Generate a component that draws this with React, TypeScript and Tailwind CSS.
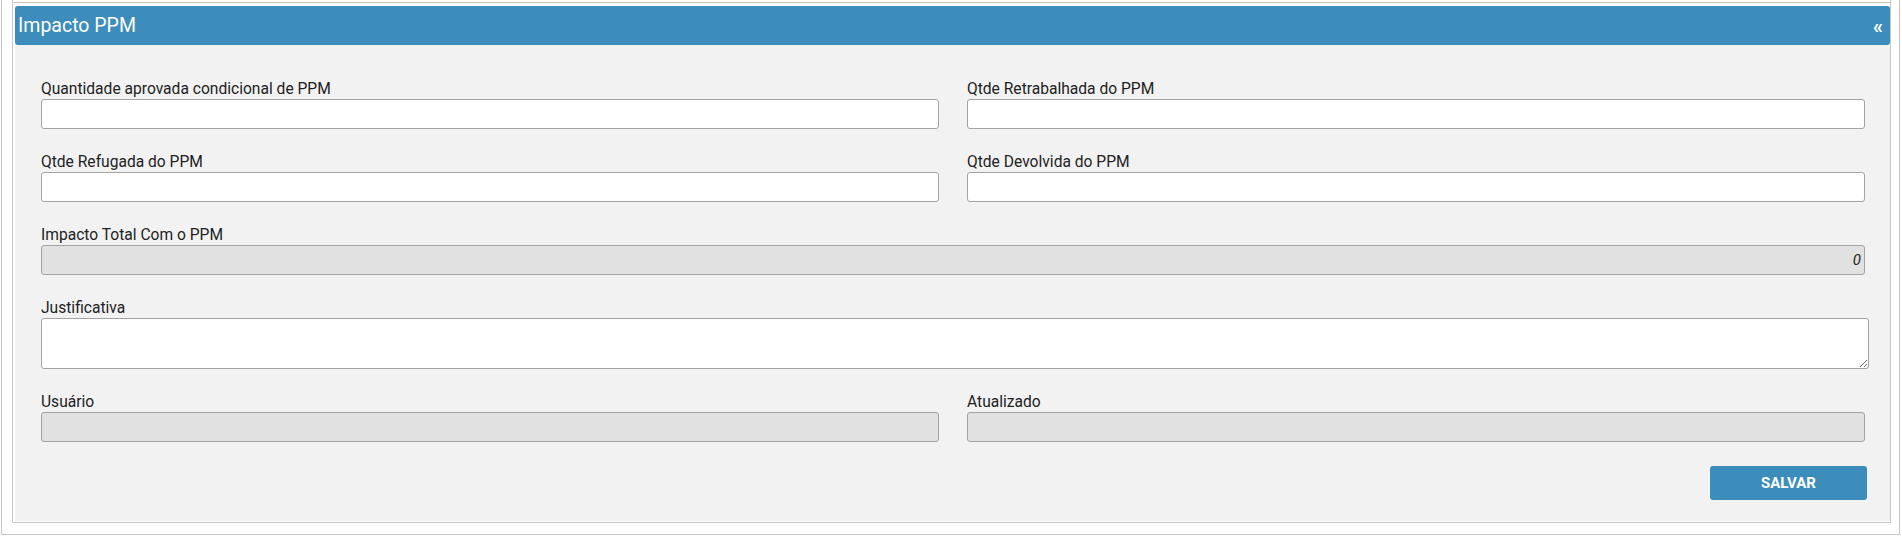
import { useState } from "react";

const FONT = "font-['Roboto','Liberation_Sans',sans-serif]";

function Field({
  label,
  value,
  disabled,
  italicRight,
}: {
  label: string;
  value?: string;
  disabled?: boolean;
  italicRight?: boolean;
}) {
  return (
    <div className="flex flex-col">
      <label className="h-[19px] text-[15.6px] leading-[19px] text-[#222]">{label}</label>
      <input
        type="text"
        defaultValue={value}
        disabled={disabled}
        className={`h-[30px] w-full rounded-[3px] border border-[#a3a3a3] px-[4px] text-[15px] text-[#222] outline-none ${
          disabled ? "bg-[#e1e1e1]" : "bg-white"
        } ${italicRight ? "pr-[3px] text-right italic" : ""}`}
      />
    </div>
  );
}

export default function App() {
  const [open, setOpen] = useState(true);

  return (
    <div className={`min-h-screen bg-white ${FONT}`}>
      <div className="ml-[1px] w-[1899px] border-x border-b border-[#c6c6c6] pb-[11px] pl-[10px] pr-[8px]">
        <div className="border-x border-b border-[#c6c6c6] bg-white pb-[1px] pl-[2px]">
          {/* remnant of the block above */}
          <div className="ml-[-2px] h-[3px] border-b border-[#c6c6c6] pl-[2px]" />
          <div className="mt-[3px] bg-[#f2f2f2]">
            <div className="flex h-[39px] items-center justify-between rounded-[3px] bg-[#3c8dbc] pl-[3px] pr-[7px] text-white">
              <span className="text-[19.5px] leading-none">Impacto PPM</span>
              <button
                onClick={() => setOpen(!open)}
                className="text-[20px] font-bold leading-none text-white"
              >
                «
              </button>
            </div>

            {open && (
              <div className="flex flex-col gap-[24px] pb-[21px] pl-[26px] pr-[25px] pt-[35px]">
                <div className="grid grid-cols-2 gap-x-[28px] gap-y-[24px]">
                  <Field label="Quantidade aprovada condicional de PPM" />
                  <Field label="Qtde Retrabalhada do PPM" />
                  <Field label="Qtde Refugada do PPM" />
                  <Field label="Qtde Devolvida do PPM" />
                </div>

                <Field label="Impacto Total Com o PPM" value="0" disabled italicRight />

                <div className="flex flex-col">
                  <label className="h-[19px] text-[15.6px] leading-[19px] text-[#222]">
                    Justificativa
                  </label>
                  <textarea className="h-[51px] w-[calc(100%+4px)] rounded-[3px] border border-[#a3a3a3] bg-white px-[4px] text-[15px] text-[#222] outline-none" />
                </div>

                <div className="grid grid-cols-2 gap-x-[28px]">
                  <Field label="Usuário" disabled />
                  <Field label="Atualizado" disabled />
                </div>

                <div className="flex justify-end">
                  <button className="mr-[-2px] h-[34px] w-[157px] rounded-[3px] bg-[#3c8dbc] text-[15px] font-bold text-white">
                    SALVAR
                  </button>
                </div>
              </div>
            )}
          </div>
        </div>
      </div>
    </div>
  );
}
